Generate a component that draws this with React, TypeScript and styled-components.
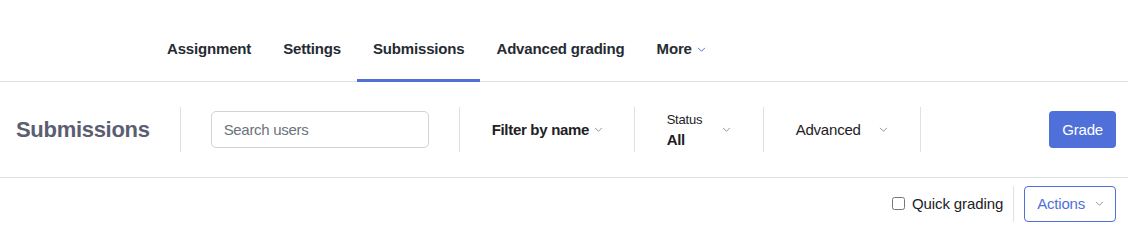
import React, { FC } from "react";
import styled, { createGlobalStyle } from "styled-components";

const GlobalStyle = createGlobalStyle`
  html, body {
    margin: 0;
    padding: 0;
    background: #ffffff;
    font-family: "Liberation Sans", Arial, sans-serif;
    color: #1d2125;
  }
  * { box-sizing: border-box; }
`;

const BLUE = "#4f6fd9";
const LINE = "#dee2e6";

const Chevron: FC<{ color?: string; size?: number }> = ({ color = "#8f959e", size = 9 }) => (
  <svg width={size} height={size} viewBox="0 0 10 10" fill="none">
    <path d="M1.5 3.5 L5 7 L8.5 3.5" stroke={color} strokeWidth="1.1" strokeLinecap="round" strokeLinejoin="round" />
  </svg>
);

const TabBar = styled.nav`
  display: flex;
  padding: 30px 0 0 151px;
  border-bottom: 1px solid ${LINE};
`;

const Tab = styled.a<{ $active?: boolean }>`
  display: flex;
  align-items: center;
  gap: 5px;
  padding: 10px 16px 21px;
  line-height: 18px;
  font-size: 15px;
  font-weight: 700;
  color: #262b33;
  letter-spacing: -0.17px;
  white-space: nowrap;
  border-bottom: 3px solid ${(p) => (p.$active ? BLUE : "transparent")};
  margin-bottom: -1px;
`;

const Toolbar = styled.div`
  display: flex;
  align-items: center;
  height: 96px;
  padding: 0 12px 0 16px;
  border-bottom: 1px solid ${LINE};
`;

const Title = styled.h2`
  margin: 0 30px 0 0;
  font-size: 22px;
  font-weight: 700;
  color: #5b5e70;
  letter-spacing: -0.3px;
  white-space: nowrap;
`;

const Divider = styled.div<{ $h?: number }>`
  width: 1px;
  height: ${(p) => p.$h ?? 45}px;
  background: ${LINE};
  flex: none;
`;

const Search = styled.input`
  flex: none;
  width: 218px;
  height: 37px;
  margin: 0 30px;
  padding: 0 12px;
  border: 1px solid #ced4da;
  border-radius: 5px;
  font-family: inherit;
  font-size: 15px;
  color: #1d2125;
  letter-spacing: -0.3px;
  &::placeholder { color: #6a737b; }
`;

const Dropdown = styled.div<{ $w: number }>`
  flex: none;
  display: flex;
  align-items: center;
  justify-content: space-between;
  width: ${(p) => p.$w}px;
  padding: 0 32px;
  font-size: 15px;
  white-space: nowrap;
`;

const BoldLabel = styled.span`
  font-weight: 700;
  letter-spacing: -0.3px;
  display: flex;
  align-items: center;
  gap: 5px;
  line-height: 20px;
`;

const PlainLabel = styled.span`
  letter-spacing: -0.2px;
`;

const Stack = styled.div`
  display: flex;
  flex-direction: column;
  gap: 2px;
  margin-top: 2px;
`;

const Small = styled.span`
  font-size: 13px;
  line-height: 16px;
  letter-spacing: -0.2px;
`;

const Spacer = styled.div`
  flex: 1;
`;

const Primary = styled.button`
  height: 37px;
  padding: 0 13px;
  border: none;
  border-radius: 4px;
  background: ${BLUE};
  color: #ffffff;
  font-family: inherit;
  font-size: 15px;
  letter-spacing: -0.2px;
`;

const Footer = styled.div`
  display: flex;
  align-items: center;
  justify-content: flex-end;
  height: 51px;
  padding: 0 12px 0 0;
  gap: 10px;
`;

const Check = styled.label`
  display: flex;
  align-items: center;
  gap: 7px;
  font-size: 15px;
  letter-spacing: -0.1px;
  color: #1d2125;
  input {
    width: 13px;
    height: 13px;
    margin: 0;
  }
`;

const Outline = styled.button`
  display: flex;
  align-items: center;
  gap: 10px;
  height: 36px;
  padding: 0 11px 0 12px;
  border: 1px solid ${BLUE};
  border-radius: 4px;
  background: #ffffff;
  color: ${BLUE};
  font-family: inherit;
  font-size: 15px;
  letter-spacing: -0.2px;
`;

const App: FC = () => (
  <>
    <GlobalStyle />
    <TabBar>
      <Tab>Assignment</Tab>
      <Tab>Settings</Tab>
      <Tab $active>Submissions</Tab>
      <Tab>Advanced grading</Tab>
      <Tab>
        More <Chevron color="#4f6fd9" />
      </Tab>
    </TabBar>
    <Toolbar>
      <Title>Submissions</Title>
      <Divider />
      <Search placeholder="Search users" />
      <Divider />
      <Dropdown $w={174}>
        <BoldLabel>
          Filter by name <Chevron />
        </BoldLabel>
      </Dropdown>
      <Divider />
      <Dropdown $w={128}>
        <Stack>
          <Small>Status</Small>
          <BoldLabel>All</BoldLabel>
        </Stack>
        <Chevron />
      </Dropdown>
      <Divider />
      <Dropdown $w={156}>
        <PlainLabel>Advanced</PlainLabel>
        <Chevron />
      </Dropdown>
      <Divider />
      <Spacer />
      <Primary>Grade</Primary>
    </Toolbar>
    <Footer>
      <Check>
        <input type="checkbox" />
        Quick grading
      </Check>
      <Divider $h={36} />
      <Outline>
        Actions <Chevron />
      </Outline>
    </Footer>
  </>
);

export default App;
